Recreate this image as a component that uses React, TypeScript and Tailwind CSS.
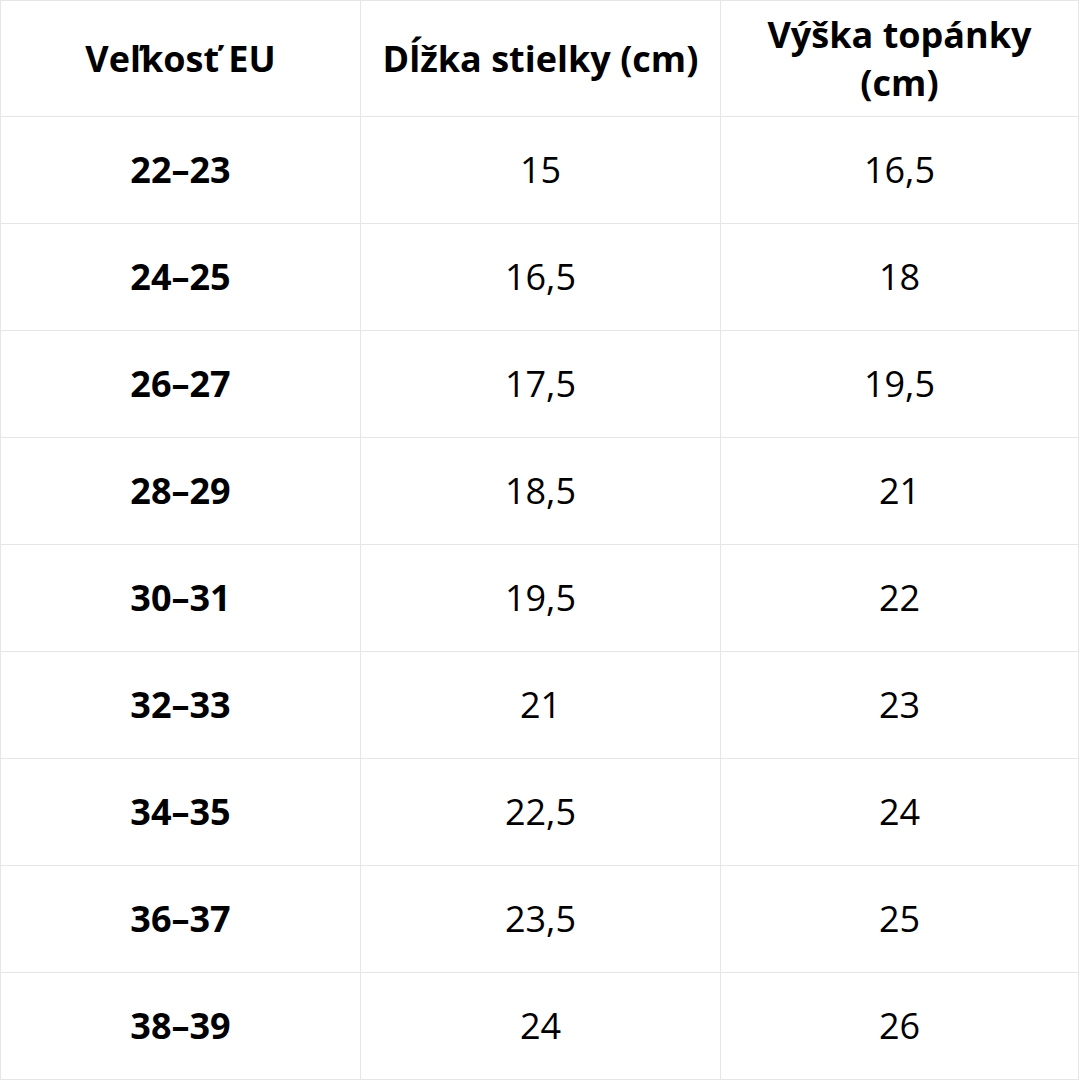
const rows: [string, string, string][] = [
  ["22–23", "15", "16,5"],
  ["24–25", "16,5", "18"],
  ["26–27", "17,5", "19,5"],
  ["28–29", "18,5", "21"],
  ["30–31", "19,5", "22"],
  ["32–33", "21", "23"],
  ["34–35", "22,5", "24"],
  ["36–37", "23,5", "25"],
  ["38–39", "24", "26"],
];

export default function App() {
  return (
    <div className="w-[1080px] h-[1080px] bg-white text-black font-['Open_Sans',sans-serif]">
      <div className="grid grid-cols-[360px_360px_358px] grid-rows-[116px_repeat(9,107px)] border-l border-t border-[#e6e6e6] w-[1079px]">
        <div className="flex items-center justify-center text-center border-r border-b border-[#e6e6e6] text-[36px] font-bold leading-[48px] px-3">
          Veľkosť EU
        </div>
        <div className="flex items-center justify-center text-center border-r border-b border-[#e6e6e6] text-[36px] font-bold leading-[48px] px-3">
          Dĺžka stielky (cm)
        </div>
        <div className="flex items-center justify-center text-center border-r border-b border-[#e6e6e6] text-[36px] font-bold leading-[48px] px-3">
          Výška topánky (cm)
        </div>
        {rows.map(([a, b, c]) => (
          <>
            <div key={a + "a"} className="flex items-center justify-center border-r border-b border-[#e6e6e6] text-[36px] font-bold">
              {a}
            </div>
            <div key={a + "b"} className="flex items-center justify-center border-r border-b border-[#e6e6e6] text-[36px]">
              {b}
            </div>
            <div key={a + "c"} className="flex items-center justify-center border-r border-b border-[#e6e6e6] text-[36px]">
              {c}
            </div>
          </>
        ))}
      </div>
    </div>
  );
}
